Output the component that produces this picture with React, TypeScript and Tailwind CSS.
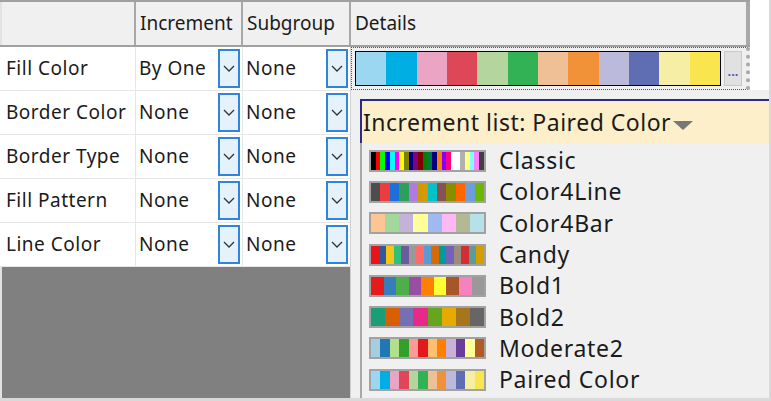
import React from 'react';

// Palette data for the increment list
const palettes: { name: string; colors: string[] }[] = [
  {
    name: 'Classic',
    colors: ['#000000', '#ff0000', '#00ff00', '#0000ff', '#00ffff', '#ff00ff', '#ffff00', '#808000', '#000080', '#800080', '#800000', '#008000', '#007a3d', '#000080', '#ff8000', '#8000ff', '#ff0080', '#ffffff', '#ffffff', '#b0b0b0', '#ffff80', '#80ffff', '#ff80ff', '#404040'],
  },
  {
    name: 'Color4Line',
    colors: ['#4d4d4d', '#ee3b3b', '#1e6fd9', '#2ca05a', '#b07be0', '#d09a00', '#00c2c8', '#8b5050', '#8c8c00', '#ff6600', '#6d9edb', '#6ab800'],
  },
  {
    name: 'Color4Bar',
    colors: ['#fcc594', '#a2d89b', '#c4b3d9', '#fffe9a', '#9fbaf2', '#feb8f4', '#b3b992', '#b5e2e8'],
  },
  {
    name: 'Candy',
    colors: ['#e8141b', '#2e5c9a', '#f6c31a', '#31c07b', '#6a5b9e', '#999999', '#ff6b6b', '#5b9bd5', '#d46b08', '#009c9c', '#7361bc', '#9c8b7a', '#d02f35', '#5b9c9a', '#d39e00'],
  },
  {
    name: 'Bold1',
    colors: ['#e41a1c', '#377eb8', '#4daf4a', '#984ea3', '#ff7f00', '#ffff33', '#a65628', '#f781bf', '#999999'],
  },
  {
    name: 'Bold2',
    colors: ['#1b9e77', '#d95f02', '#7570b3', '#e7298a', '#66a61e', '#e6ab02', '#a6761d', '#666666'],
  },
  {
    name: 'Moderate2',
    colors: ['#a6cee3', '#1f78b4', '#b2df8a', '#33a02c', '#fb9a99', '#e31a1c', '#fdbf6f', '#ff7f00', '#cab2d6', '#6a3d9a', '#ffff99', '#b15928'],
  },
  {
    name: 'Paired Color',
    colors: ['#9bd7f1', '#00aee4', '#eba4c3', '#dd4758', '#b4d59e', '#33b155', '#efc095', '#f19138', '#bcbadb', '#5f6db2', '#f7eea5', '#f9e64f'],
  },
];

const rows = [
  { label: 'Fill Color', inc: 'By One', sub: 'None' },
  { label: 'Border Color', inc: 'None', sub: 'None' },
  { label: 'Border Type', inc: 'None', sub: 'None' },
  { label: 'Fill Pattern', inc: 'None', sub: 'None' },
  { label: 'Line Color', inc: 'None', sub: 'None' },
];

const DropButton: React.FC = () => (
  <div className="w-[22px] h-[39px] mr-[2px] border-2 border-[#2f85de] bg-[#e5f1fb] flex items-center justify-center shrink-0">
    <svg width="12" height="7" viewBox="0 0 12 7">
      <path d="M1 1 L6 6 L11 1" fill="none" stroke="#333" strokeWidth="1.3" />
    </svg>
  </div>
);

const Swatch: React.FC<{ colors: string[] }> = ({ colors }) => (
  <div className="w-[117px] h-[22px] border-2 border-[#a2a2a2] flex shrink-0">
    {colors.map((c, i) => (
      <div key={i} className="flex-1 h-full" style={{ backgroundColor: c }} />
    ))}
  </div>
);

export default function App() {
  const paired = palettes[palettes.length - 1].colors;

  return (
    <div
      className="w-[771px] h-[401px] relative overflow-hidden bg-[#f0f0f0] border-r-2 border-b-[3px] border-[#d9d9d9] flex text-[#1b1b1b]"
      style={{ fontFamily: '"Noto Sans", "Open Sans", sans-serif' }}
    >
      {/* Property grid */}
      <div className="w-[750px] flex flex-col border-t-2 border-[#a0a0a0]">
        {/* Header */}
        <div className="h-[45px] flex bg-[#f0f0f0] border-b-2 border-[#a0a0a0] text-[19px]">
          <div className="w-[136px] border-l-2 border-l-[#e2e2e2] border-r-2 border-[#a8a8a8]" />
          <div className="w-[107px] border-r-2 border-[#a8a8a8] flex items-center pl-[4px]">Increment</div>
          <div className="w-[108px] border-r-2 border-[#a8a8a8] flex items-center pl-[4px]">Subgroup</div>
          <div className="flex-1 border-r-[4px] border-[#a8a8a8] flex items-center pl-[4px]">Details</div>
        </div>

        {/* Rows */}
        {rows.map((r, i) => (
          <div key={r.label} className="h-[44px] flex border-b border-[#e6e6e6] text-[19px] tracking-[0.5px]">
            <div className="w-[136px] bg-white border-r border-[#e6e6e6] flex items-center pl-[6px]">{r.label}</div>
            <div className="w-[107px] bg-white border-r border-[#e6e6e6] flex items-center justify-between pl-[3px]">
              <span>{r.inc}</span>
              <DropButton />
            </div>
            <div className="w-[108px] bg-white border-r border-[#d8d8d8] flex items-center justify-between pl-[3px]">
              <span>{r.sub}</span>
              <DropButton />
            </div>
            {i === 0 ? (
              <div className="flex-1 border border-dotted border-[#555] border-r-[4px] border-r-[#a8a8a8] bg-[#f0f0f0] flex items-center pl-[3px] pr-[2px] gap-[3px]">
                <div className="w-[366px] h-[35px] border border-black flex">
                  {paired.map((c, k) => (
                    <div key={k} className="flex-1 h-full" style={{ backgroundColor: c }} />
                  ))}
                </div>
                <div className="w-[18px] h-[35px] bg-[#e1e1e1] border border-[#c9c9c9] flex items-center justify-center pt-[6px] text-[13px] font-bold leading-none tracking-normal text-[#5858c0]">
                  ...
                </div>
              </div>
            ) : (
              <div className="flex-1 bg-[#f0f0f0]" />
            )}
          </div>
        ))}

        {/* Empty area */}
        <div className="flex-1 bg-[#808080] border-l-2 border-[#e2e2e2]" />
      </div>
      <div className="flex-1 bg-white h-[90px]" />

      {/* Increment list popup */}
      <div className="absolute left-[350px] top-[90px] right-0 bottom-0 bg-[#f0f0f0] border-l border-[#d0d0d0] pl-[9px] pt-[9px] flex flex-col">
        <div className="h-[44px] shrink-0 bg-[#fdefc9] border-t-2 border-l-2 border-[#2a2a8a] flex items-center pl-[1px] text-[23px] tracking-[0.5px] leading-none">
          <span>Increment list: Paired Color</span>
          <svg width="20" height="9" viewBox="0 0 20 9" className="ml-[2px] mt-[6px]">
            <path d="M0 0 L20 0 L10 9 Z" fill="#777" />
          </svg>
        </div>
        <div className="flex-1 border-l-2 border-[#a8a8a8] flex flex-col pt-[2px] pl-[7px]">
          {palettes.map((p) => (
            <div key={p.name} className="h-[31.3px] shrink-0 flex items-center gap-[13px]">
              <Swatch colors={p.colors} />
              <span className="text-[23px] tracking-[0.7px] leading-none">{p.name}</span>
            </div>
          ))}
        </div>
      </div>
    </div>
  );
}
